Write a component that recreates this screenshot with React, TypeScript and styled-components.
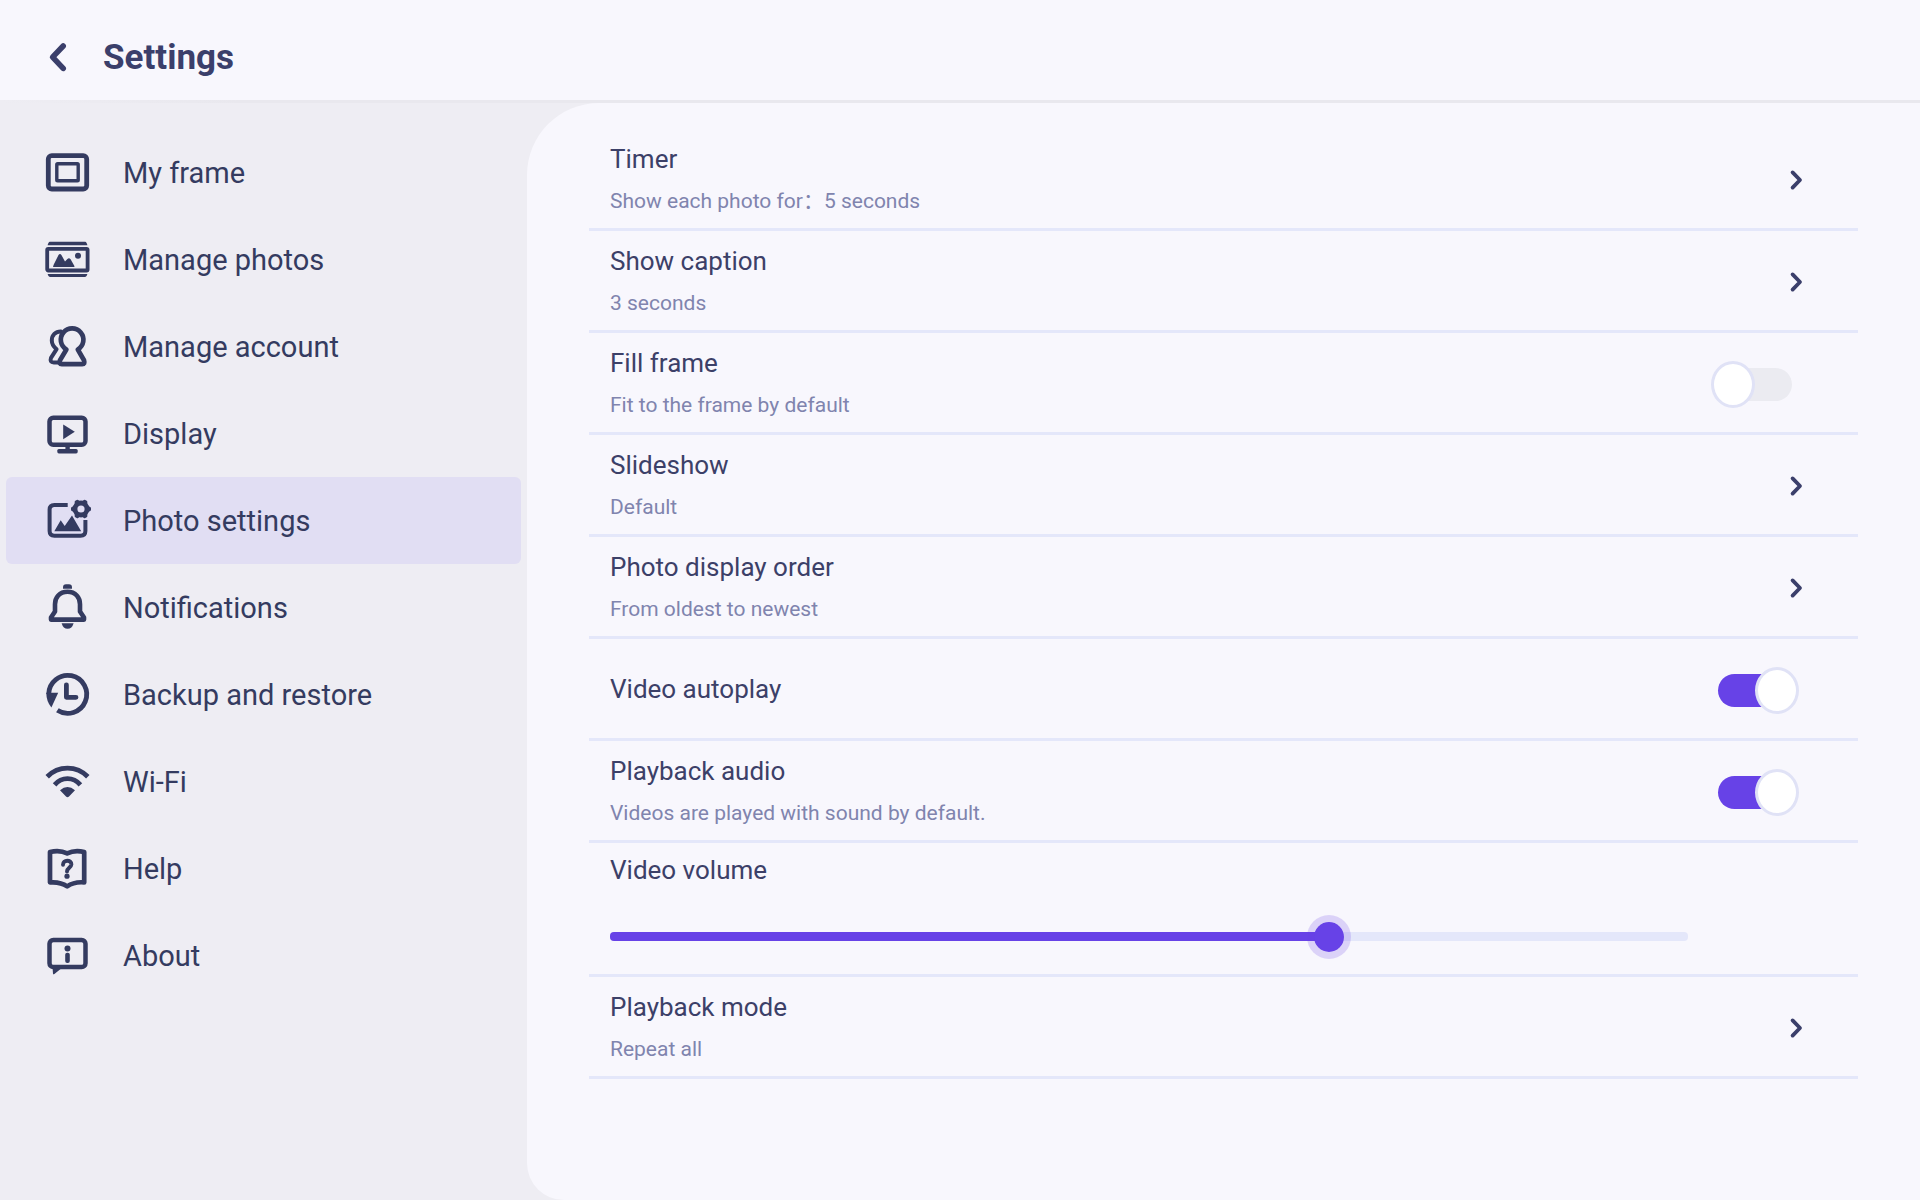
import React, { useState } from "react";
import styled, { createGlobalStyle, css } from "styled-components";

const color = {
  surface: "#f8f7fd",
  sidebar: "#eeedf3",
  active: "#e1def3",
  headerLine: "#e9e8ee",
  divider: "#e4e7fa",
  heading: "#3b3f6b",
  nav: "#343b60",
  title: "#3c4068",
  subtitle: "#8084ae",
  accent: "#6742e7",
  trackOff: "#ebebf1",
  knobRing: "#e0e2f6",
};

const GlobalStyle = createGlobalStyle`
  *, *::before, *::after { box-sizing: border-box; }
  body {
    margin: 0;
    background: ${color.surface};
    font-family: Roboto, "Noto Sans CJK SC", sans-serif;
  }
  button { font: inherit; color: inherit; background: none; border: 0; padding: 0; cursor: pointer; }
  ul { list-style: none; margin: 0; padding: 0; }
`;

const Page = styled.div`
  min-height: 100vh;
  display: flex;
  flex-direction: column;
`;

const Header = styled.header`
  display: flex;
  align-items: center;
  gap: 23px;
  height: 100px;
  padding: 16px 36px 0;
  color: ${color.heading};
`;

const HeaderLine = styled.div`
  height: 3px;
  background: linear-gradient(to right, ${color.sidebar}, ${color.headerLine} 240px);
`;

const BackButton = styled.button`
  display: grid;
  place-items: center;
  width: 44px;
  height: 44px;
`;

const Heading = styled.h1`
  margin: 0;
  font-size: 35px;
  line-height: 42px;
  font-weight: 700;
`;

const Body = styled.div`
  flex: 1;
  display: flex;
  background: ${color.sidebar};
`;

const Sidebar = styled.nav`
  flex: 0 0 527px;
  padding: 26px 6px;
  color: ${color.nav};
`;

const NavLink = styled.a<{ $active?: boolean }>`
  display: flex;
  align-items: center;
  gap: 31px;
  height: 87px;
  padding-left: 37px;
  border-radius: 6px;
  background: ${(p) => (p.$active ? color.active : "transparent")};
  color: inherit;
  text-decoration: none;
  font-size: 29px;
  line-height: 36px;
`;

const Panel = styled.main`
  flex: 1;
  min-width: 0;
  padding: 26px 62px;
  background: ${color.surface};
  border-radius: 72px 0 0 37px;
`;

const Row = styled.li`
  border-bottom: 3px solid ${color.divider};
`;

const rowLayout = css`
  display: flex;
  align-items: center;
  justify-content: space-between;
  width: 100%;
  height: 99px;
  padding: 0 50px 0 21px;
  text-align: left;
  cursor: pointer;
`;

const RowButton = styled.button`
  && {
    ${rowLayout}
  }
`;

const RowLabel = styled.label`
  ${rowLayout}
`;

const RowText = styled.span`
  display: flex;
  flex-direction: column;
  gap: 13px;
`;

const Title = styled.span`
  font-size: 26px;
  line-height: 32px;
  color: ${color.title};
`;

const Subtitle = styled.span`
  font-size: 21px;
  line-height: 26px;
  color: ${color.subtitle};
`;

const ChevronIcon = styled.svg`
  width: 24px;
  height: 24px;
  margin-top: 3px;
  color: ${color.heading};
`;

const Switch = styled.input`
  appearance: none;
  display: grid;
  align-items: center;
  width: 88px;
  height: 47px;
  margin: 4px 9px 0 0;
  cursor: pointer;

  &::before,
  &::after {
    content: "";
    grid-area: 1 / 1;
  }
  &::before {
    height: 33px;
    margin: 0 7px;
    border-radius: 17px;
    background: ${color.trackOff};
  }
  &::after {
    width: 44px;
    height: 47px;
    border: 3px solid ${color.knobRing};
    border-radius: 50%;
    background: #fff;
  }
  &:checked::before {
    background: ${color.accent};
  }
  &:checked::after {
    justify-self: end;
  }
`;

const VolumeBlock = styled.div`
  display: flex;
  flex-direction: column;
  gap: 28px;
  padding: 11px 170px 15px 21px;
`;

const VolumeLabel = styled.label`
  font-size: 26px;
  line-height: 32px;
  color: ${color.title};
`;

const SliderStack = styled.div`
  display: grid;
  align-items: center;

  & > * {
    grid-area: 1 / 1;
  }
`;

const SliderTrack = styled.div`
  height: 9px;
  border-radius: 4px;
  overflow: hidden;
  background: ${color.divider};
`;

const SliderFill = styled.div`
  height: 100%;
  background: ${color.accent};
`;

const SliderInput = styled.input`
  appearance: none;
  height: 45px;
  margin: 0 -22px;
  background: transparent;
  cursor: pointer;

  &::-webkit-slider-runnable-track {
    height: 44px;
    background: transparent;
  }
  &::-webkit-slider-thumb {
    appearance: none;
    width: 44px;
    height: 44px;
    border: 7px solid rgba(103, 66, 231, 0.2);
    border-radius: 50%;
    background: ${color.accent};
    background-clip: padding-box;
  }
`;

const stroke = {
  fill: "none",
  stroke: "currentColor",
  strokeLinecap: "round",
  strokeLinejoin: "round",
} as const;

const gearAngles = [0, 60, 120, 180, 240, 300];

const icons = {
  frame: (
    <g {...stroke}>
      <rect x="5.3" y="7.6" width="38.4" height="33.4" rx="3.5" strokeWidth="4.8" />
      <rect x="13.8" y="15.8" width="21.4" height="17" rx="0.8" strokeWidth="3.4" />
    </g>
  ),
  photos: (
    <>
      <path fill="currentColor" d="M6.8 6.7H42.2Q43.6 6.7 44.4 10.2H4.6Q5.4 6.7 6.8 6.7Z" />
      <path fill="currentColor" d="M4.6 39H44.4Q43.6 42 42.2 42H6.8Q5.4 42 4.6 39Z" />
      <rect {...stroke} x="4.2" y="13.8" width="40.4" height="21.7" rx="1" strokeWidth="3.8" />
      <path fill="currentColor" d="M10 32Q10.3 30.5 11 29L15.5 20Q17 18 18.4 20L22 26.5L24.4 24Q26 22.4 27.6 24.2L31.4 31V32Z" />
      <circle fill="currentColor" cx="35" cy="20.7" r="3" />
    </>
  ),
  account: (
    <g {...stroke}>
      <path strokeWidth="4" d="M18 9.4C12.5 9.2 8.8 13.4 8.8 18.4C8.8 22.6 11 25 13.6 27.2L8 35.8Q6.4 40.4 10.8 40.4H15.5" />
      <path strokeWidth="4.7" d="M23.4 27.5A11.3 11.3 0 1 1 34.8 27.5L41 38.2Q42.2 42.2 39.2 42.2H18.8Q15.8 42.2 17 38.2Z" />
    </g>
  ),
  display: (
    <>
      <rect {...stroke} x="6.5" y="8.8" width="36" height="27" rx="3.8" strokeWidth="4.5" />
      <path fill="currentColor" d="M20.2 15.4V30.2L31.8 22.8Z" />
      <path fill="currentColor" d="M22.4 37H26.8V41H22.4Z" />
      <rect fill="currentColor" x="14.3" y="40" width="20.4" height="4.4" rx="1.6" />
    </>
  ),
  photoSettings: (
    <>
      <path
        {...stroke}
        strokeLinecap="butt"
        strokeWidth="4"
        d="M24.7 8.9H11.4Q6.6 8.9 6.6 13.6V35Q6.6 39.7 11.4 39.7H37.6Q42.4 39.7 42.4 35V24"
      />
      <path fill="currentColor" d="M11.3 35.3L17.7 24.2L21.7 30L29 19.6L38.2 35.3Z" />
      <circle {...stroke} cx="38" cy="13" r="6" strokeWidth="4.8" />
      {gearAngles.map((a) => (
        <path key={a} fill="currentColor" transform={`rotate(${a} 38 13)`} d="M44.5 9.6L47.2 11Q48 11.4 48 12.2V13.8Q48 14.6 47.2 15L44.5 16.4Z" />
      ))}
    </>
  ),
  bell: (
    <>
      <path fill="currentColor" d="M20 5.8V4.4Q20 1.2 23 1.2H26Q29 1.2 29 4.4V5.8Z" />
      <path
        {...stroke}
        strokeWidth="4.6"
        d="M24.5 8.8C16.4 8.8 12 14.4 12 21.2V28.4L8 34.6V36.6H41V34.6L37 28.4V21.2C37 14.4 32.6 8.8 24.5 8.8Z"
      />
      <path fill="currentColor" d="M18.6 40.2H30.6Q29 45.8 24.6 45.8Q20.2 45.8 18.6 40.2Z" />
    </>
  ),
  backup: (
    <>
      <path {...stroke} strokeLinecap="butt" strokeWidth="4.8" d="M14.4 40.3A19 19 0 1 0 5.7 24" />
      <path fill="currentColor" d="M3.3 22.7H15.2L8.4 37.4Q3.3 31.4 3.3 22.7Z" />
      <path {...stroke} strokeWidth="4.8" d="M23.4 14.8V27.3H33" />
    </>
  ),
  wifi: (
    <>
      <path {...stroke} strokeLinecap="butt" strokeWidth="4.8" d="M4.2 19.8Q12.6 11.2 24.5 11.2T44.8 19.8" />
      <path {...stroke} strokeLinecap="butt" strokeWidth="4.8" d="M11.6 27.8Q17 21.6 24.5 21.6T37.4 27.8" />
      <path fill="currentColor" d="M17 33.2Q24.5 26.8 32 33.2L26 39.4Q24.5 41 23 39.4Z" />
    </>
  ),
  help: (
    <>
      <path
        {...stroke}
        strokeWidth="4.7"
        d="M7 8C13 6.6 19 6.8 24.2 9.4C29.4 6.8 35.4 6.6 41.2 8V38.4C34 37.8 29 39 24.2 42.4C19.4 39 14.4 37.8 7 38.4Z"
      />
      <path {...stroke} strokeWidth="3.9" d="M20 20.8C19.8 15.4 28.6 15.4 28.4 20.4C28.2 23.6 24 24 24 27.4" />
      <circle fill="currentColor" cx="24" cy="32.2" r="2.6" />
    </>
  ),
  about: (
    <>
      <rect {...stroke} x="6.5" y="8.9" width="36" height="27.2" rx="3.8" strokeWidth="4.5" />
      <path fill="currentColor" d="M9.6 37.4H18.2L11.4 43Q10 43.8 10 42.4Z" />
      <circle fill="currentColor" cx="24.5" cy="17.4" r="3" />
      <rect fill="currentColor" x="22.2" y="21.7" width="4.6" height="10.4" rx="2" />
    </>
  ),
};

type IconName = keyof typeof icons;

const NavIcon = ({ name }: { name: IconName }) => (
  <svg width="49" height="49" viewBox="0 0 49 49" aria-hidden="true">
    {icons[name]}
  </svg>
);

const Chevron = () => (
  <ChevronIcon viewBox="0 0 24 24" aria-hidden="true">
    <path {...stroke} strokeWidth="3.8" d="M8.6 4.4L16 12L8.6 19.6" />
  </ChevronIcon>
);

const navItems: { icon: IconName; label: string; active?: boolean }[] = [
  { icon: "frame", label: "My frame" },
  { icon: "photos", label: "Manage photos" },
  { icon: "account", label: "Manage account" },
  { icon: "display", label: "Display" },
  { icon: "photoSettings", label: "Photo settings", active: true },
  { icon: "bell", label: "Notifications" },
  { icon: "backup", label: "Backup and restore" },
  { icon: "wifi", label: "Wi-Fi" },
  { icon: "help", label: "Help" },
  { icon: "about", label: "About" },
];

const Text = ({ title, subtitle }: { title: string; subtitle?: string }) => (
  <RowText>
    <Title>{title}</Title>
    {subtitle && <Subtitle>{subtitle}</Subtitle>}
  </RowText>
);

const LinkRow = ({ title, subtitle }: { title: string; subtitle: string }) => (
  <Row>
    <RowButton type="button">
      <Text title={title} subtitle={subtitle} />
      <Chevron />
    </RowButton>
  </Row>
);

const SwitchRow = ({ title, subtitle, on }: { title: string; subtitle?: string; on?: boolean }) => (
  <Row>
    <RowLabel>
      <Text title={title} subtitle={subtitle} />
      <Switch type="checkbox" role="switch" defaultChecked={on} />
    </RowLabel>
  </Row>
);

const MAX_VOLUME = 15;

const VolumeRow = () => {
  const [volume, setVolume] = useState(10);
  return (
    <Row>
      <VolumeBlock>
        <VolumeLabel htmlFor="volume">Video volume</VolumeLabel>
        <SliderStack>
          <SliderTrack>
            <SliderFill style={{ width: `${(volume / MAX_VOLUME) * 100}%` }} />
          </SliderTrack>
          <SliderInput
            id="volume"
            type="range"
            min={0}
            max={MAX_VOLUME}
            value={volume}
            onChange={(e) => setVolume(Number(e.target.value))}
          />
        </SliderStack>
      </VolumeBlock>
    </Row>
  );
};

export default function App() {
  return (
    <Page>
      <GlobalStyle />
      <Header>
        <BackButton type="button" aria-label="Back">
          <svg width="44" height="44" viewBox="0 0 44 44" aria-hidden="true">
            <path {...stroke} strokeWidth="5.6" d="M27.2 10L16.6 21.2L27.2 32.4" />
          </svg>
        </BackButton>
        <Heading>Settings</Heading>
      </Header>
      <HeaderLine />
      <Body>
        <Sidebar>
          <ul>
            {navItems.map((item) => (
              <li key={item.label}>
                <NavLink href="#" $active={item.active} aria-current={item.active ? "page" : undefined}>
                  <NavIcon name={item.icon} />
                  {item.label}
                </NavLink>
              </li>
            ))}
          </ul>
        </Sidebar>
        <Panel>
          <ul>
            <LinkRow title="Timer" subtitle="Show each photo for：5 seconds" />
            <LinkRow title="Show caption" subtitle="3 seconds" />
            <SwitchRow title="Fill frame" subtitle="Fit to the frame by default" />
            <LinkRow title="Slideshow" subtitle="Default" />
            <LinkRow title="Photo display order" subtitle="From oldest to newest" />
            <SwitchRow title="Video autoplay" on />
            <SwitchRow title="Playback audio" subtitle="Videos are played with sound by default." on />
            <VolumeRow />
            <LinkRow title="Playback mode" subtitle="Repeat all" />
          </ul>
        </Panel>
      </Body>
    </Page>
  );
}
